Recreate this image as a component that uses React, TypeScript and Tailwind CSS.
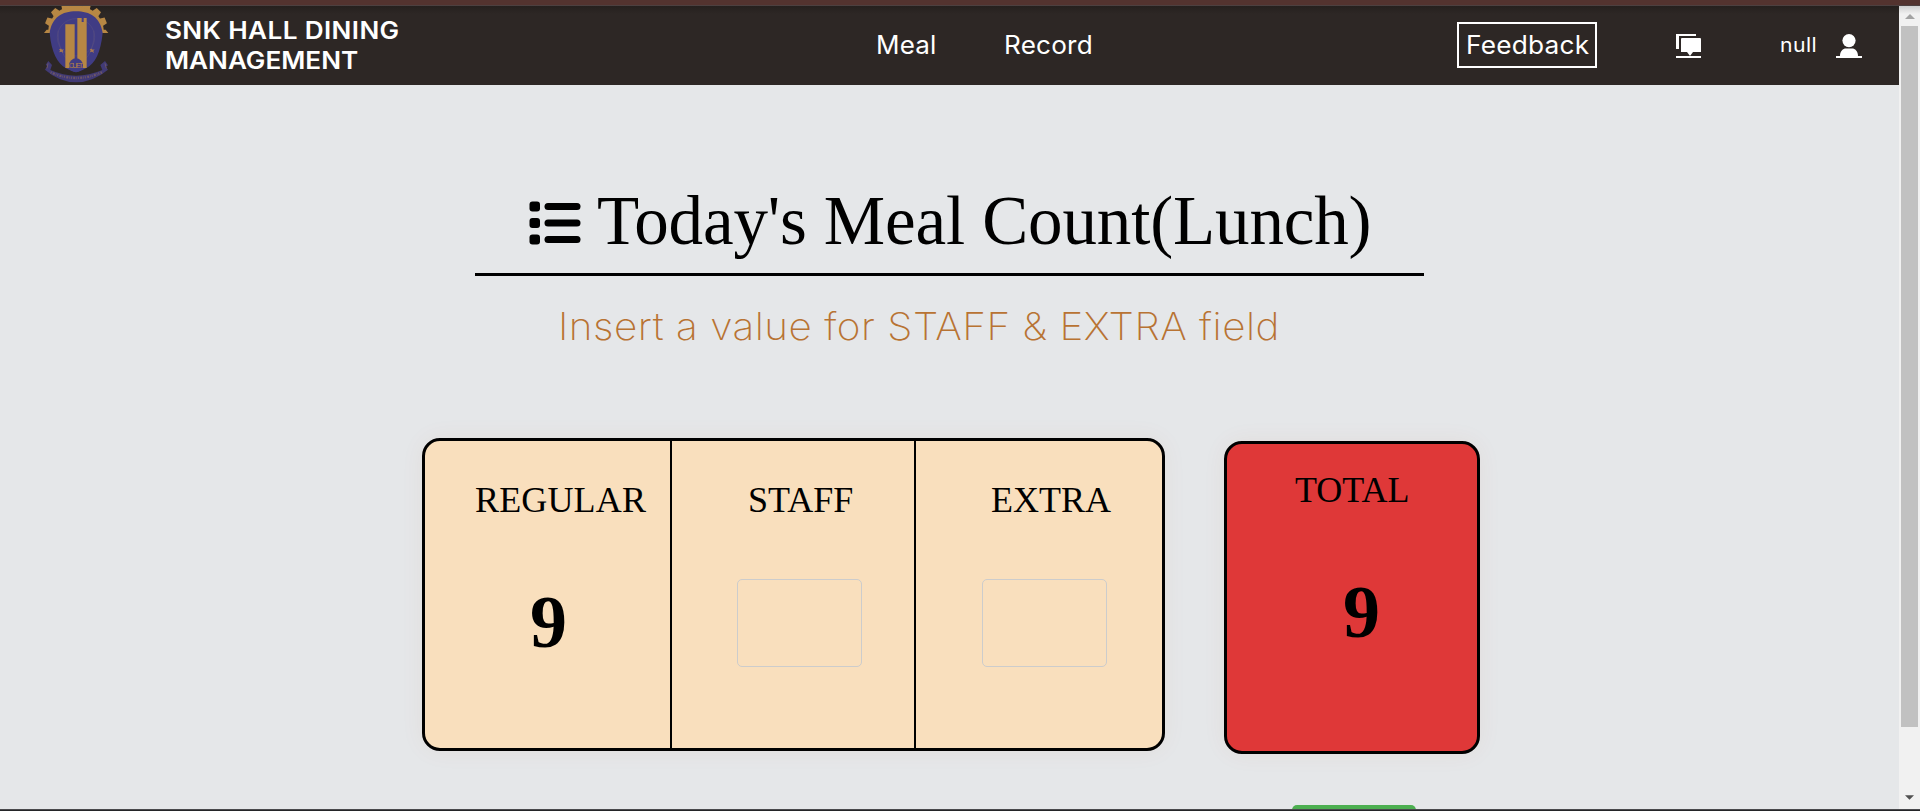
import React from "react";

const serif = "font-['Liberation_Serif',serif]";
const sans = "font-['Inter',sans-serif]";

function Logo() {
  const teeth = [-67, -45, -22, 0, 22, 45, 67];
  return (
    <svg className="block h-[79px] w-[100px] shrink-0" viewBox="0 18 300 237">
      <g fill="#b78744">
        <path d="M54 98a84 82 0 0 1 168 0z" />
        {teeth.map((a) => (
          <path key={a} d="M125 22l4-20h18l4 20z" transform={`rotate(${a} 138 99)`} />
        ))}
        <path d="M42 99l8-10h20v10zM235 99l-8-10h-20v10z" />
      </g>
      <path
        d="M59 99C66 52 96 34 138 34s73 18 80 65c-6 58-22 92-50 106q-30 20-60 0C83 191 64 157 59 99z"
        fill="#403c84"
      />
      <g fill="none" stroke="#5b5080" strokeWidth="1.5">
        <circle cx="138" cy="112" r="56" />
        <path d="M84 92q-2 60 33 92M192 92q3 60-32 92" />
      </g>
      <path
        d="M92 145l4 4 6-1-4 5 2 6-6-4-6 2 2-6-3-4h5zM184 145l4 4 6-1-4 5 2 6-6-4-6 2 2-6-3-4h5z"
        fill="#a87850"
      />
      <path d="M106 73h28v131h-28zM142 54h13v12h6V54h9v150h-28z" fill="#b78744" />
      <circle cx="138" cy="196" r="21" fill="#403c84" />
      <text
        x="138"
        y="205"
        textAnchor="middle"
        textLength="44"
        fontFamily="Liberation Sans, sans-serif"
        fontSize="22"
        fill="#b08048"
      >
        CUET
      </text>
      <path
        d="M55 183l-8 12 5 3-7 11q42 37 93 38 52-1 96-38l-7-9 7-4-9-13-14 12 6 15q-80 34-156 0l5-15z"
        fill="#413a75"
      />
      <path d="M62 217q76 34 154 0" fill="none" stroke="#6c5667" strokeWidth="7" strokeDasharray="3 4 6 3 2 3" />
      <path d="M54 190l-3 15M225 190l4 15" stroke="#6c5667" strokeWidth="3" />
    </svg>
  );
}

function Header() {
  return (
    <header
      className={`flex h-[79px] bg-[#2d2725] bg-[linear-gradient(#25201e,#2d2725_8px)] text-white ${sans}`}
    >
      <div className="flex w-[876px] shrink-0 pl-[30px]">
        <Logo />
        <div className="pt-[10px] pl-[35px] text-[24px] leading-[30px] font-semibold whitespace-nowrap">
          <div className="origin-left scale-x-[1.088] tracking-[0.35px]">SNK HALL DINING</div>
          <div className="origin-left scale-x-[1.088] tracking-[0px]">MANAGEMENT</div>
        </div>
      </div>
      <nav className="flex w-[581px] shrink-0 pt-[24px] text-[25px] leading-[30px] font-normal tracking-[0.2px]">
        <a className="w-[128px] origin-left scale-x-[1.04]">Meal</a>
        <a className="origin-left scale-x-[1.045]">Record</a>
      </nav>
      <div className="mt-[16px] flex h-[46px] w-[140px] shrink-0 items-center border-2 border-white pl-[7px] text-[25px] leading-[30px]">
        <span className="origin-left scale-x-[1.05] tracking-[0.2px]">Feedback</span>
      </div>
      <svg className="mt-[28px] ml-[79px] h-[24px] w-[25px] shrink-0" viewBox="0 0 25 24" fill="#fff">
        <path d="M0 0h20v2H3v13H0zM5 5q0-1 1-1h18q1 0 1 1v13H17l-3 4-3-4H5zM0 22h25v2H0z" />
      </svg>
      <span className="mt-[23px] ml-[79px] w-[56px] shrink-0 origin-left scale-x-[1.06] text-[20px] leading-[32px] tracking-[0.4px]">
        null
      </span>
      <svg className="mt-[28px] h-[24px] w-[26px] shrink-0" viewBox="0 0 26 24" fill="#fff">
        <circle cx="13" cy="6.6" r="6.6" />
        <path d="M4 22c0-5 3-7.5 6-7.5h6c3 0 6 2.5 6 7.5h4v2H0v-2z" />
      </svg>
    </header>
  );
}

function Scrollbar() {
  return (
    <div className="flex w-[21px] shrink-0 flex-col items-center bg-[#f1f1f1] bg-[linear-gradient(#cfcfcf,#f1f1f1_8px)]">
      <svg className="mt-[8px] h-[5px] w-[10px]" viewBox="0 0 10 5" fill="#a3a3a3">
        <path d="M5 0l5 5H0z" />
      </svg>
      <div className="mt-[7px] mr-px h-[701px] w-[17px] bg-[#c1c1c1]" />
      <svg className="mt-[68px] h-[5px] w-[9px]" viewBox="0 0 10 5" fill="#505050">
        <path d="M0 0h10L5 5z" />
      </svg>
    </div>
  );
}

function Field() {
  return <input className="block h-[88px] w-[125px] rounded-[5px] border border-[#ccc] bg-transparent" />;
}

function MealCounts() {
  return (
    <section className="flex h-[313px] w-[743px] shrink-0 rounded-[18px] border-3 border-black bg-[#f9dfbd] text-[36px] leading-[40px] shadow-[0_0_25px_rgba(180,90,0,0.06)]">
      <div className="w-[247px] border-r-2 border-black pt-[39px] pl-[50px]">
        <div className="tracking-[0.15px]">REGULAR</div>
        <div className="mt-[57px] pl-[55px] text-[74px] leading-[90px] font-bold">9</div>
      </div>
      <div className="w-[244px] border-r-2 border-black pt-[39px] pl-[65px]">
        <div className="pl-[11px]">STAFF</div>
        <div className="mt-[59px]">
          <Field />
        </div>
      </div>
      <div className="pt-[39px] pl-[66px]">
        <div className="pl-[9px]">EXTRA</div>
        <div className="mt-[59px]">
          <Field />
        </div>
      </div>
    </section>
  );
}

function TotalCard() {
  return (
    <section className="h-[313px] w-[256px] shrink-0 rounded-[18px] border-3 border-black bg-[#df3838] pt-[26px] text-[36px] leading-[40px] shadow-[0_0_25px_rgba(180,60,0,0.06)]">
      <div className="pl-[68px]">TOTAL</div>
      <div className="mt-[57px] pl-[116px] text-[74px] leading-[90px] font-bold">9</div>
    </section>
  );
}

export default function App() {
  return (
    <div className="flex h-[811px] w-[1920px] flex-col overflow-hidden bg-[#e5e7e9]">
      <div className="h-[6px] shrink-0 border-b border-[#4c4040] bg-[#53332f]" />
      <div className="flex h-[803px] shrink-0">
        <div className="flex h-[803px] w-[1899px] flex-col overflow-hidden">
          <Header />
          <main className={`flex flex-col text-black ${serif}`}>
            <h1 className="ml-[475px] flex h-[191px] w-[949px] border-b-3 border-black pt-[94px] pl-[54px] text-[69px] leading-[85px] tracking-[-0.14px] whitespace-nowrap">
              <svg className="mt-[22px] h-[44px] w-[52px] shrink-0" viewBox="0 0 52 44">
                <rect x="0.5" y="0.5" width="10.5" height="10" rx="3" />
                <rect x="0.5" y="17" width="10.5" height="10" rx="3" />
                <rect x="0.5" y="33.5" width="10.5" height="10" rx="3" />
                <rect x="15.5" y="2" width="36" height="7" rx="3.5" />
                <rect x="15.5" y="18.5" width="36" height="7" rx="3.5" />
                <rect x="15.5" y="35" width="36" height="7" rx="3.5" />
              </svg>
              <span className="ml-[16px]">Today's Meal Count(Lunch)</span>
            </h1>
            <p className="mt-[26px] ml-[558px] origin-left scale-x-[1.063] text-[38px] leading-[48px] font-[200] tracking-[0.5px] whitespace-nowrap text-[#b87333] font-['Inter',sans-serif]">
              Insert a value for STAFF &amp; EXTRA field
            </p>
            <div className="mt-[88px] flex items-start gap-[59px] pl-[422px]">
              <MealCounts />
              <div className="mt-[3px]">
                <TotalCard />
                <div className="mt-[51px] ml-[68px] h-[50px] w-[124px] rounded-[5px] bg-[#4caf50]" />
              </div>
            </div>
          </main>
        </div>
        <Scrollbar />
      </div>
      <div className="h-[2px] shrink-0 border-t border-[#4a4a4d] bg-[#242528]" />
    </div>
  );
}
